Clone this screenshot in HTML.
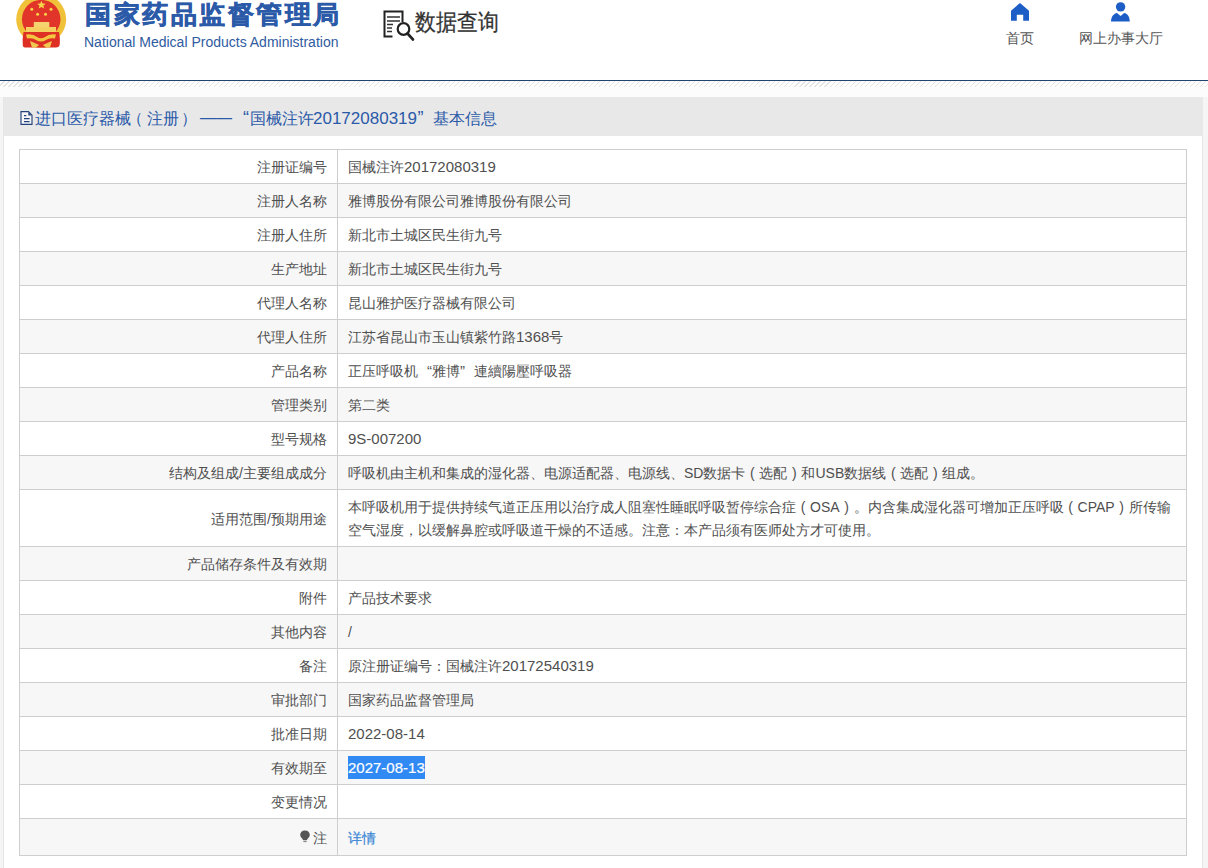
<!DOCTYPE html>
<html><head><meta charset="utf-8">
<style>
*{margin:0;padding:0;box-sizing:border-box}
html,body{width:1208px;height:868px;overflow:hidden;background:#fff;font-family:"Liberation Sans",sans-serif;}
.abs{position:absolute;white-space:nowrap}
.t1{left:85px;top:-2px;font-size:26px;font-weight:bold;letter-spacing:2.55px;-webkit-text-stroke:0.6px #2b5aa8;color:#2b5aa8;transform:scaleY(0.96);transform-origin:0 0}
.t2{left:84px;top:34px;font-size:14px;color:#2f5b9f}
.sqt{left:415px;top:7px;font-size:21px;color:#333;-webkit-text-stroke:0.25px #333;transform:scaleY(1.1);transform-origin:0 0}
.nav{top:30px;font-size:14px;color:#555}
.bl{position:absolute;left:0;top:80px;width:1208px;height:1px;background:#22446f}
.hatch{position:absolute;left:0;top:81px;width:1208px;height:6px;
 background:repeating-linear-gradient(135deg,#fdfdfd 0 2.8px,#e4e4e2 2.8px 3.54px);}
.bg{position:absolute;left:0;top:87px;width:1208px;height:781px;background:#fdfcfc}
.side{position:absolute;top:97px;height:771px;background:#f5f5f5}
.panel{position:absolute;left:3px;top:97px;width:1200px;height:771px;background:#fff;border-left:1px solid #e6e6e6;border-right:1px solid #e6e6e6}
.ph{position:absolute;left:0;top:0;width:1199px;height:39px;background:#e8e8e8}
.pht{position:absolute;left:-3px;top:0;font-size:16px;color:#2b5aa8;white-space:nowrap}
.pht span{position:absolute;top:12px}
.n17{font-size:17px;top:12px!important}
.q18{font-size:18px;top:11px!important}
table{position:absolute;left:19px;top:149px;width:1168px;border-collapse:collapse;font-size:14px;color:#4f4f4f}
td{border:1px solid #cecece;height:34px;padding:1px 10px 0 10px;vertical-align:middle;line-height:16px}
td.k{width:318px;text-align:right}
tr:nth-child(even) td{background:#f7f7f7}
.n{font-size:15px}
.pp{display:inline-block;width:14px;text-align:center}
.ql,.qr{display:inline-block;width:14px;font-size:15px}.ql{text-align:right}.qr{text-align:left}
.sel{background:#3189f3;color:#fff;padding:3px 0 3px 0}
a{color:#3a86d6;text-decoration:none;-webkit-text-stroke:0.2px #3a86d6}
.sel{-webkit-text-stroke:0.2px #fff}
</style></head><body>
<!-- emblem -->
<svg class="abs" style="left:0;top:0" width="80" height="52" viewBox="0 0 80 52">
 <circle cx="41.2" cy="19.2" r="25" fill="#f0c23a"/>
 <circle cx="41.2" cy="19.2" r="19.3" fill="#e2352a"/>
 <path d="M23.5 32 L59 32 Q60.5 40 59.5 45.5 Q59 47.5 56 47.5 L26 47.5 Q23 47.5 22.8 45.5 Q22 40 23.5 32 Z" fill="#de2f24"/>
 <path d="M26 34.5 Q33 33.5 37 37 Q41 39.5 45 37 Q49 33.5 56 34.5 L55 38.5 Q49 37.5 46 40 Q41 43 36 40 Q33 37.5 27 38.5 Z" fill="#f2c640"/>
 <path d="M30 41 Q35 43 39 45 L41 47.5 L43 45 Q47 43 52 41 L50 47.5 L32 47.5 Z" fill="#f0c850"/>
 <path d="M36 47.5 L41 43.5 L46 47.5 Z" fill="#de2f24"/>
 <rect x="26" y="27" width="30" height="5" fill="#f5d060"/>
 <rect x="33.8" y="22" width="15.5" height="5" fill="#f5d470"/>
 <polygon points="41.4,0.8 42.6,3.6 45.6,3.8 43.3,5.7 44.1,8.6 41.4,7 38.7,8.6 39.5,5.7 37.2,3.8 40.2,3.6" fill="#f7d54a"/>
 <circle cx="31.8" cy="9.3" r="1.5" fill="#f7d54a"/><circle cx="51" cy="9.3" r="1.5" fill="#f7d54a"/>
 <circle cx="37.6" cy="14.2" r="1.5" fill="#f7d54a"/><circle cx="45.5" cy="14.2" r="1.5" fill="#f7d54a"/>
</svg>
<div class="abs t1">国家药品监督管理局</div>
<div class="abs t2">National Medical Products Administration</div>
<!-- data search icon -->
<svg class="abs" style="left:380px;top:6.5px" width="36" height="38" viewBox="0 0 36 38">
 <path d="M12.5 29.5 H4.5 V4.5 H22.5 V15" fill="none" stroke="#222" stroke-width="2"/>
 <path d="M7 10 H20 M7 14 H20 M7 17.5 H13 M7 21 H12 M7 24.5 H12" stroke="#333" stroke-width="1.5"/>
 <circle cx="23.5" cy="22" r="5.8" fill="#fff" stroke="#222" stroke-width="2.2"/>
 <path d="M27.5 26.5 L33 32.5" stroke="#222" stroke-width="2.6" stroke-linecap="round"/>
</svg>
<div class="abs sqt">数据查询</div>
<!-- nav icons -->
<svg class="abs" style="left:1005px;top:0" width="30" height="25" viewBox="0 0 30 25">
 <path d="M15 2.9 L24 10.7 V20.7 H18.2 V14.7 H11.8 V20.7 H6 V10.7 Z" fill="#1c5ec6"/>
</svg>
<svg class="abs" style="left:1105px;top:0" width="30" height="25" viewBox="0 0 30 25">
 <circle cx="15.6" cy="6.85" r="4.7" fill="#1c5ec6"/>
 <path d="M6 21.6 C6 17 8.5 13.5 12 13 L15.6 16.1 L19.2 13 C22.7 13.5 24.8 17 24.8 21.6 Z" fill="#1c5ec6"/>
</svg>
<div class="abs nav" style="left:1006px">首页</div>
<div class="abs nav" style="left:1079px">网上办事大厅</div>

<div class="bl"></div><div class="hatch"></div>
<div class="bg"></div>
<div class="side" style="left:0;width:3px"></div>
<div class="side" style="left:1203px;width:5px"></div>
<div class="panel"><div class="ph">
 <div class="pht"><span class="m" style="left:34px">进口医疗器械</span><span class="m" style="left:126px">（</span><span class="m" style="left:145.5px">注册</span><span class="m" style="left:180px">）</span><span class="m" style="left:199px">——</span><span class="m q18" style="left:242px">“</span><span class="m" style="left:249px">国械注许</span><span class="m n17" style="left:312px">20172080319</span><span class="m q18" style="left:416.5px">”</span><span class="m" style="left:432px">基本信息</span></div>
</div></div>
<svg class="abs" style="left:0;top:0" width="40" height="130" viewBox="0 0 40 130">
 <path d="M21 111.6 H28.5 L32 115.2 V124.3 H21 Z" fill="#f6f6f6" stroke="#24427c" stroke-width="1.15"/>
 <path d="M28.3 112 V115.4 H31.8 Z" fill="#24427c"/>
 <path d="M24 115.6 H26.3 M24 118.6 H29.6 M24 121.6 H29.6" stroke="#24427c" stroke-width="1.05"/>
</svg>
<table>
<tr><td class="k">注册证编号</td><td>国械注许<span class="n">20172080319</span></td></tr>
<tr><td class="k">注册人名称</td><td>雅博股份有限公司雅博股份有限公司</td></tr>
<tr><td class="k">注册人住所</td><td>新北市土城区民生街九号</td></tr>
<tr><td class="k">生产地址</td><td>新北市土城区民生街九号</td></tr>
<tr><td class="k">代理人名称</td><td>昆山雅护医疗器械有限公司</td></tr>
<tr><td class="k">代理人住所</td><td>江苏省昆山市玉山镇紫竹路<span class="n">1368</span>号</td></tr>
<tr><td class="k">产品名称</td><td>正压呼吸机<span class="ql">“</span>雅博<span class="qr">”</span>連續陽壓呼吸器</td></tr>
<tr><td class="k">管理类别</td><td>第二类</td></tr>
<tr><td class="k">型号规格</td><td><span class="n">9S-007200</span></td></tr>
<tr><td class="k">结构及组成/主要组成成分</td><td>呼吸机由主机和集成的湿化器、电源适配器、电源线、SD数据卡<span class="pp">(</span>选配<span class="pp">)</span>和USB数据线<span class="pp">(</span>选配<span class="pp">)</span>组成。</td></tr>
<tr><td class="k" style="height:57px">适用范围/预期用途</td><td style="line-height:23px">本呼吸机用于提供持续气道正压用以治疗成人阻塞性睡眠呼吸暂停综合症<span class="pp">(</span>OSA<span class="pp">)</span>。内含集成湿化器可增加正压呼吸<span class="pp">(</span>CPAP<span class="pp">)</span>所传输空气湿度，以缓解鼻腔或呼吸道干燥的不适感。注意：本产品须有医师处方才可使用。</td></tr>
<tr><td class="k">产品储存条件及有效期</td><td></td></tr>
<tr><td class="k">附件</td><td>产品技术要求</td></tr>
<tr><td class="k">其他内容</td><td>/</td></tr>
<tr><td class="k">备注</td><td>原注册证编号：国械注许<span class="n">20172540319</span></td></tr>
<tr><td class="k">审批部门</td><td>国家药品监督管理局</td></tr>
<tr><td class="k">批准日期</td><td><span class="n">2022-08-14</span></td></tr>
<tr><td class="k">有效期至</td><td><span class="n sel">2027-08-13</span></td></tr>
<tr><td class="k">变更情况</td><td></td></tr>
<tr><td class="k" style="height:37px"><svg width="10" height="14" viewBox="0 0 10 14" style="vertical-align:-1px;margin-right:3px"><path d="M5 0.5 C8 0.5 9.8 2.6 9.8 5 C9.8 7.4 7.4 8.2 7 10 L3 10 C2.6 8.2 0.2 7.4 0.2 5 C0.2 2.6 2 0.5 5 0.5 Z" fill="#555"/><rect x="3.3" y="10.6" width="3.4" height="1.5" fill="#888"/></svg>注</td><td><a>详情</a></td></tr>
</table>
</body></html>
